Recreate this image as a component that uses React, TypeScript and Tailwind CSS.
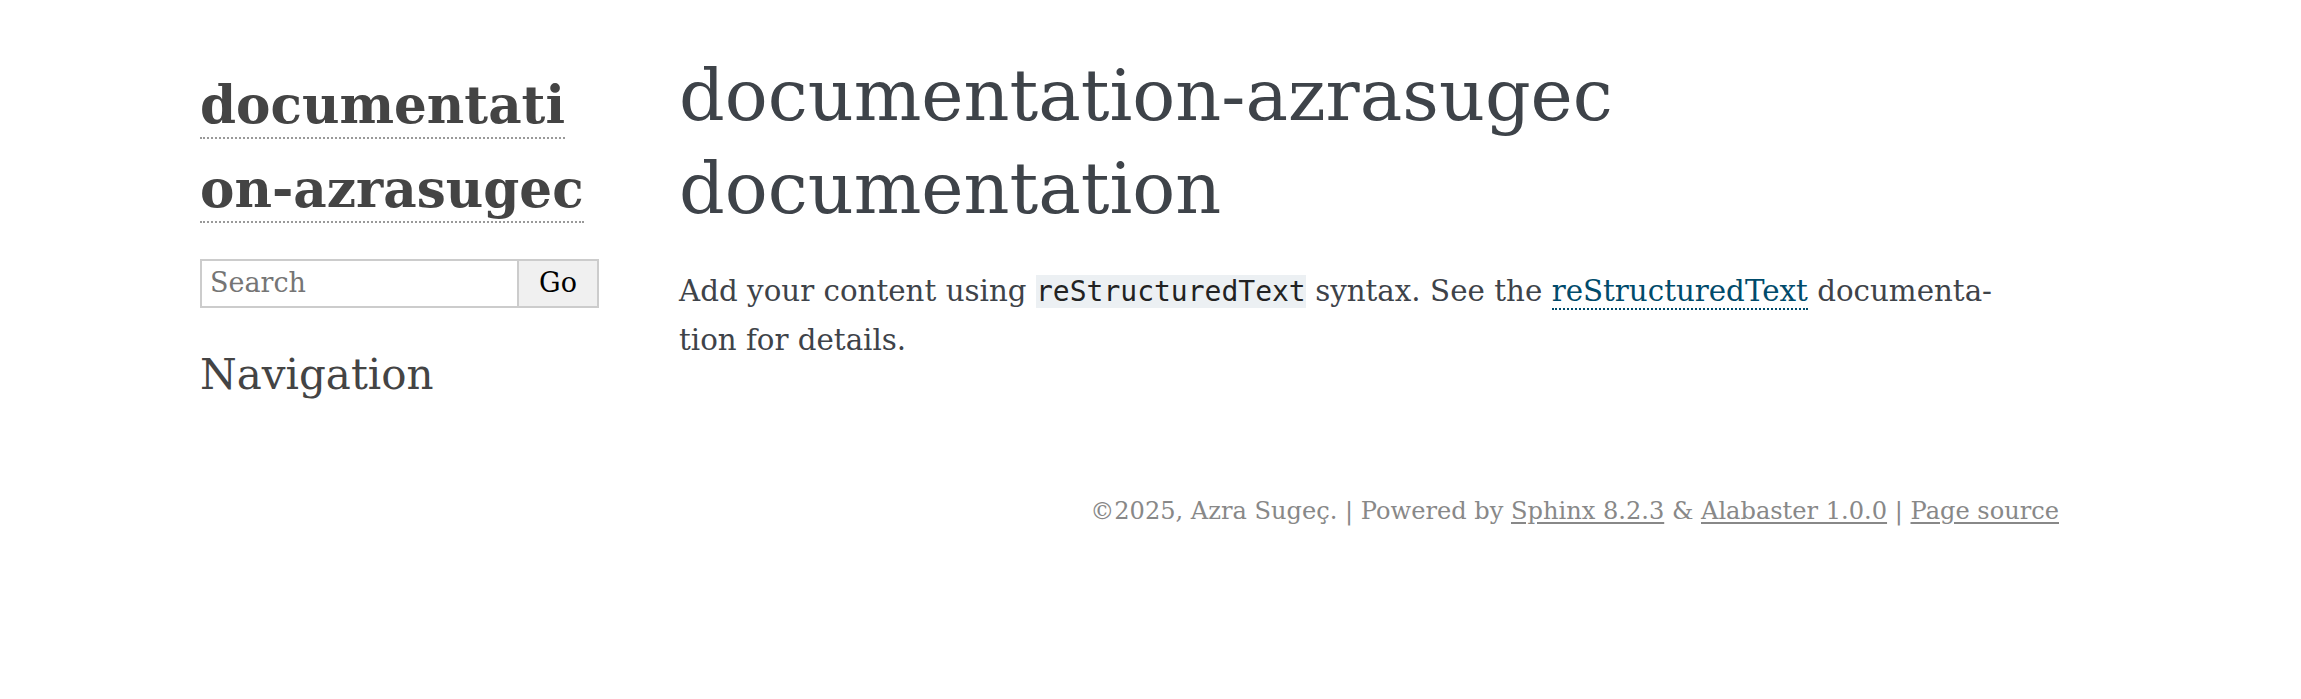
export default function App() {
  return (
    <div className="min-h-[699px] w-full bg-white font-['DejaVu_Serif',serif] text-[#3e4349]">
      <div className="ml-[200px] w-[1859px]">
        <div className="flex">
          {/* sidebar */}
          <aside className="w-[479px] shrink-0 pt-[63px]">
            <h1 className="text-[51.6px] font-bold leading-[84px] text-[#444]">
              <div>
                <a href="#" className="border-b-[2px] border-dotted border-[#999] pb-[2px]">documentati</a>
              </div>
              <div>
                <a href="#" className="border-b-[2px] border-dotted border-[#999] pb-[2px]">on-azrasugec</a>
              </div>
            </h1>
            <form className="mt-[28px] flex h-[49px] w-[399px] text-[27px]" onSubmit={(e) => e.preventDefault()}>
              <input
                type="text"
                placeholder="Search"
                className="w-[319px] border-2 border-[#cccccc] px-[8px] outline-none placeholder:text-[#757575]"
              />
              <button type="submit" className="w-[80px] border-2 border-l-0 border-[#cccccc] bg-[#f0f0f0] text-black">
                Go
              </button>
            </form>
            <h3 className="mt-[37px] text-[42px] leading-[60px] text-[#444]">Navigation</h3>
          </aside>

          {/* body */}
          <main className="w-[1315px] pt-[49px]">
            <h1 className="text-[71.4px] leading-[93px] text-[#3e4349]">
              documentation-azrasugec
              <br />
              documentation
            </h1>
            <div className="mt-[32px] text-[29.3px] leading-[49px]">
              <p className="flex w-[1313px] items-baseline justify-between whitespace-nowrap">
                <span>Add</span>
                <span>your</span>
                <span>content</span>
                <span>using</span>
                <span>
                  <code className="bg-[#ecf0f3] font-['DejaVu_Sans_Mono',monospace] text-[28px] text-[#222]">
                    reStructuredText
                  </code>
                </span>
                <span>syntax.</span>
                <span>See</span>
                <span>the</span>
                <span>
                  <a href="#" className="border-b-2 border-dotted border-[#004b6b] text-[#004b6b]">
                    reStructuredText
                  </a>
                </span>
                <span>documenta-</span>
              </p>
              <p>tion for details.</p>
            </div>
          </main>
        </div>

        <footer className="mt-[86px] text-right text-[24.1px] leading-[40px] text-[#888]">
          ©2025, Azra Sugeç. | Powered by{' '}
          <a href="#" className="underline decoration-[#888] underline-offset-[3px]">Sphinx 8.2.3</a> &amp;{' '}
          <a href="#" className="underline decoration-[#888] underline-offset-[3px]">Alabaster 1.0.0</a> |{' '}
          <a href="#" className="underline decoration-[#888] underline-offset-[3px]">Page source</a>
        </footer>
      </div>
    </div>
  )
}
